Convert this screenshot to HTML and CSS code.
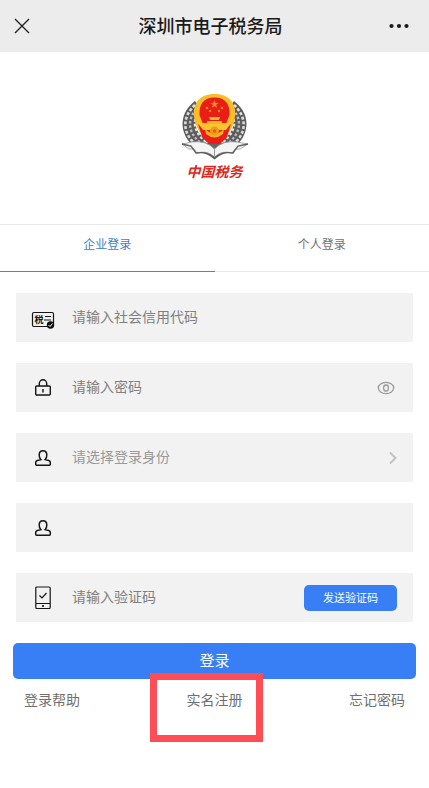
FILE: index.html
```html
<!DOCTYPE html>
<html lang="zh-CN">
<head>
<meta charset="utf-8">
<meta name="viewport" content="width=device-width, initial-scale=1">
<title>深圳市电子税务局</title>
<link rel="stylesheet" href="styles.css">
</head>
<body>
<header class="topbar">
  <button class="icon-button" type="button" aria-label="关闭">
    <svg width="16" height="16" viewBox="0 0 16 16" fill="none" stroke="#222" stroke-width="1.4"><path d="M1 1 15 15M15 1 1 15"/></svg>
  </button>
  <h1 class="title">深圳市电子税务局</h1>
  <button class="icon-button" type="button" aria-label="更多">
    <svg width="20" height="6" viewBox="0 0 20 6" fill="#1a1a1a"><circle cx="2.5" cy="3" r="2.1"/><circle cx="10" cy="3" r="2.1"/><circle cx="17.5" cy="3" r="2.1"/></svg>
  </button>
</header>

<main>
  <div class="brand">
    <svg class="emblem" width="68" height="67" viewBox="0 0 68 67" aria-hidden="true">
      <!-- wheat wreath -->
      <g fill="none">
        <path d="M18 13C4 24 4 41 23 53" stroke="#5c5c5c" stroke-width="13"/>
        <path d="M49 13C63 24 63 41 44 53" stroke="#5c5c5c" stroke-width="13"/>
        <path d="M14 12C0 25 1 42 18 54" stroke="#dedede" stroke-width="2.6" stroke-dasharray="3 1.8"/>
        <path d="M18 13C5 26 6 40 22 52" stroke="#bdbdbd" stroke-width="2.4" stroke-dasharray="2.4 2"/>
        <path d="M22 14C10 26 11 38 26 50" stroke="#e4e4e4" stroke-width="2.2" stroke-dasharray="2.8 2"/>
        <path d="M53 12C67 25 66 42 49 54" stroke="#dedede" stroke-width="2.6" stroke-dasharray="3 1.8"/>
        <path d="M49 13C62 26 61 40 45 52" stroke="#bdbdbd" stroke-width="2.4" stroke-dasharray="2.4 2"/>
        <path d="M45 14C57 26 56 38 41 50" stroke="#e4e4e4" stroke-width="2.2" stroke-dasharray="2.8 2"/>
      </g>
      <!-- book and ribbon -->
      <path d="M14 50H53L51 59Q42 59 33.500 66.500Q25 59 16 59Z" fill="#666"/>
      <path d="M1 51 11 49Q25 47 33.500 56Q42 47 56 49L67 51 59 56 54 56 51 60Q41 57 33.500 64Q26 57 16 60L13 56 8 56Z" fill="#f4f4f4" stroke="#999" stroke-width=".8"/>
      <path d="M1 51 10 53 15 60Q26 58 33.500 65Q41 58 52 60L57 53 67 51" fill="none" stroke="#5c5c5c" stroke-width="1.300"/>
      <path d="M33.500 56V64" stroke="#999"/>
      <!-- national emblem -->
      <path d="M33.500 1C49 1 55 11 54 23C53 35 46 45 33.500 49C21 45 14 35 13 23C12 11 18 1 33.500 1Z" fill="#f9bd27"/>
      <path d="M33.500 4.500C45 4.500 49 12 48.500 22L45 31H22L18.500 22C18 12 22 4.500 33.500 4.500Z" fill="#e91e16"/>
      <path d="M17 31 24 37H43L50 31 46 44 39 51H28L21 44Z" fill="#e91e16"/>
      <path d="M17 30H50L45 37H22Z" fill="#fbc52e"/>
      <path d="M24 36Q33.500 45 43 36L42 41Q33.500 48 25 41Z" fill="#f6b11f"/>
      <path d="M28 24H39L38 27H29ZM26 28H41V31H26Z" fill="#f8b629"/>
      <circle cx="33.500" cy="38" r="4.500" fill="#e9a018"/>
      <circle cx="33.500" cy="38" r="1.800" fill="#e9601a"/>
      <path d="m33.500 7 1.100 2.900h3l-2.400 1.800.9 3-2.600-1.800-2.600 1.800.9-3-2.400-1.800h3Z" fill="#f98c24"/>
      <g fill="#f98c24"><circle cx="26" cy="15" r="1.200"/><circle cx="41" cy="15" r="1.200"/><circle cx="29" cy="18" r="1.200"/><circle cx="38" cy="18" r="1.200"/></g>
    </svg>
    <span class="brand-name">中国税务</span>
  </div>

  <nav class="tabs">
    <a class="tab tab-active" href="#company">企业登录</a>
    <a class="tab" href="#personal">个人登录</a>
  </nav>

  <form class="login">
    <div class="fields">
      <div class="field">
        <label class="field-icon" for="code">
          <svg width="24" height="22" viewBox="0 0 24 22" role="img" aria-label="社会信用代码">
            <rect x="1.500" y="5.500" width="21" height="14" rx="1.500" fill="none" stroke="#151515" stroke-width="1.200"/>
            <text class="tax-glyph" x="3.500" y="16">税</text>
            <path d="M14 9.500H20M13 13H20" stroke="#151515" stroke-width="1.200"/>
            <circle cx="19.500" cy="18" r="3.700" fill="#111"/>
            <path d="m17.500 18 1.500 1.500 2.500-3" fill="none" stroke="#fff"/>
          </svg>
        </label>
        <input id="code" class="control" type="text" placeholder="请输入社会信用代码">
      </div>

      <div class="field">
        <label class="field-icon" for="password">
          <svg width="18" height="18" viewBox="0 0 18 18" fill="none" stroke="#151515" stroke-width="1.400" role="img" aria-label="密码"><rect x="1.700" y="7" width="14.600" height="9" rx="1"/><path d="M5.300 7V4.500a3.700 3.700 0 0 1 7.400 0V7M9 10v3.500"/></svg>
        </label>
        <input id="password" class="control" type="password" placeholder="请输入密码">
        <button class="reveal" type="button" aria-label="显示密码">
          <svg width="18" height="14" viewBox="0 0 18 14" fill="none" stroke="#999" stroke-width="1.300"><ellipse cx="9" cy="7" rx="7.700" ry="5.600"/><rect x="6.700" y="4" width="4.600" height="6" rx="2.200"/></svg>
        </button>
      </div>

      <div class="field">
        <label class="field-icon" for="role">
          <svg width="18" height="18" viewBox="0 0 18 18" fill="none" stroke="#151515" stroke-width="1.500" role="img" aria-label="登录身份"><path d="M6.800 10.600C5.700 9.600 5.200 8 5.200 6C5.200 3.200 6.600 1.700 9 1.700S12.800 3.200 12.800 6C12.800 8 12.300 9.600 11.200 10.600L14.700 11.500Q16.300 12 16.300 13.300V15.300Q16.300 16.200 15.400 16.200H2.600Q1.700 16.200 1.700 15.300V13.300Q1.700 12 3.300 11.500Z"/></svg>
        </label>
        <select id="role" class="control control-select">
          <option>请选择登录身份</option>
        </select>
        <svg class="chevron" width="8" height="14" viewBox="0 0 8 14" fill="none" stroke="#c2c2c2" stroke-width="2" aria-hidden="true"><path d="m1 1.500 5.500 5.500L1 12.500"/></svg>
      </div>

      <div class="field">
        <label class="field-icon" for="person">
          <svg width="18" height="18" viewBox="0 0 18 18" fill="none" stroke="#151515" stroke-width="1.500" role="img" aria-label="姓名"><path d="M6.800 10.600C5.700 9.600 5.200 8 5.200 6C5.200 3.200 6.600 1.700 9 1.700S12.800 3.200 12.800 6C12.800 8 12.300 9.600 11.200 10.600L14.700 11.500Q16.300 12 16.300 13.300V15.300Q16.300 16.200 15.400 16.200H2.600Q1.700 16.200 1.700 15.300V13.300Q1.700 12 3.300 11.500Z"/></svg>
        </label>
        <input id="person" class="control" type="text">
      </div>

      <div class="field">
        <label class="field-icon" for="captcha">
          <svg width="16" height="24" viewBox="0 0 16 24" fill="none" stroke="#151515" stroke-width="1.200" role="img" aria-label="验证码"><rect x=".8" y="1" width="14.400" height="21.500" rx="1"/><path d="M1 17.500H15M4.500 9.500 7 12l4.500-5"/><circle cx="8" cy="20" r=".5"/></svg>
        </label>
        <input id="captcha" class="control" type="text" placeholder="请输入验证码">
        <button class="send" type="button">发送验证码</button>
      </div>
    </div>

    <button class="submit" type="submit">登录</button>

    <div class="links">
      <a href="#help">登录帮助</a>
      <a class="register" href="#register">实名注册</a>
      <a href="#forgot">忘记密码</a>
    </div>
  </form>
</main>
</body>
</html>
```
FILE: styles.css
```css
*,
*::after {
  box-sizing: border-box;
}

body {
  min-height: 100vh;
  margin: 0;
  background: #fff;
  color: #707070;
  font-family: "Noto Sans CJK SC", sans-serif;
  font-size: 14px;
  line-height: 20px;
}

a {
  color: inherit;
  text-decoration: none;
}

button {
  padding: 0;
  border: 0;
  background: none;
  font: inherit;
  cursor: pointer;
}

svg {
  display: block;
}

.topbar {
  display: flex;
  align-items: center;
  justify-content: space-between;
  height: 52px;
  padding: 0 16px 0 8px;
  background: #ececec;
}

.icon-button {
  display: grid;
  place-items: center;
  width: 28px;
  height: 28px;
}

.title {
  margin: 0;
  padding-bottom: 2px;
  color: #1a1a1a;
  font-size: 18px;
  font-weight: 500;
  line-height: 24px;
}

.brand {
  display: flex;
  flex-direction: column;
  align-items: center;
  padding: 41px 0 42px;
}

.brand-name {
  color: #dc2820;
  font-size: 14px;
  font-style: italic;
  font-weight: 700;
  line-height: 22px;
}

.tabs {
  display: flex;
  border-top: 1px solid #e8e8e8;
}

.tab {
  flex: 1;
  padding: 9px 0 17px;
  border-bottom: 1px solid #e8e8e8;
  font-size: 12px;
  text-align: center;
}

.tab-active {
  border-color: #5586b5;
  color: #3c7fc9;
}

.login {
  padding: 21px 13px 48px;
}

.fields {
  display: grid;
  gap: 21px;
  padding: 0 3px;
}

.field {
  display: flex;
  align-items: center;
  height: 49px;
  padding: 0 16px 0 15px;
  background: #f2f2f2;
}

.field-icon {
  display: grid;
  flex: none;
  place-items: center;
  width: 24px;
  margin-right: 17px;
}

.tax-glyph {
  fill: #151515;
  font-size: 9px;
  font-weight: 700;
}

.control {
  flex: 1;
  min-width: 0;
  height: 48px;
  padding: 0 0 3px;
  border: 0;
  outline: 0;
  background: transparent;
  color: #808080;
  font: inherit;
}

.control::placeholder {
  color: #808080;
  opacity: 1;
}

.control-select {
  appearance: none;
  color: #999;
}

.reveal {
  display: grid;
  place-items: center;
  width: 22px;
  height: 22px;
}

.send {
  width: 93px;
  height: 26px;
  padding-bottom: 2px;
  border-radius: 5px;
  background: #387ef5;
  color: #fff;
  font-size: 11px;
}

.submit {
  display: block;
  width: 100%;
  height: 36px;
  margin-top: 21px;
  padding-bottom: 2px;
  border-radius: 5px;
  background: #387ef5;
  color: #fff;
  font-size: 15px;
}

.links {
  display: flex;
  justify-content: space-between;
  padding: 10px 11px 0;
}

.register {
  position: relative;
}

.register::after {
  content: "";
  position: absolute;
  top: -16px;
  left: -37px;
  width: 113px;
  height: 69px;
  border: 7px solid #ff4d55;
  pointer-events: none;
}
```
